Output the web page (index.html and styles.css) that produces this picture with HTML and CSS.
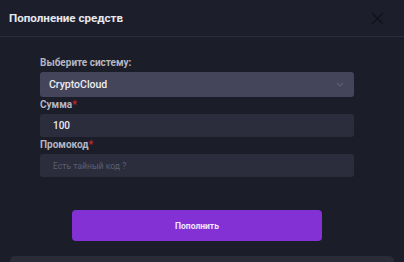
FILE: index.html
```html
<!DOCTYPE html>
<html lang="ru">
<head>
  <meta charset="UTF-8" />
  <meta name="viewport" content="width=device-width, initial-scale=1.0"/>
  <title>Пополнение средств</title>
  <link rel="stylesheet" href="styles.css">
</head>
<body>
  <div class="modal">
    <div class="modal-head">
      <h2>Пополнение средств</h2>
      <button class="close-btn" aria-label="Закрыть">
        <svg width="13" height="13" viewBox="0 0 13 13"><path d="M1.5 1.5L11.5 11.5M11.5 1.5L1.5 11.5" stroke="currentColor" stroke-width="1.6" stroke-linecap="round"/></svg>
      </button>
    </div>

    <form class="modal-body">
      <label class="field-label">Выберите систему:</label>
      <div class="select">
        <span>CryptoCloud</span>
        <svg width="8" height="5" viewBox="0 0 8 5"><path d="M1 1L4 4L7 1" fill="none" stroke="currentColor" stroke-width="1.2"/></svg>
      </div>

      <label class="field-label">Сумма<span class="req">*</span></label>
      <input type="text" class="field" value="100" />

      <label class="field-label">Промокод<span class="req">*</span></label>
      <input type="text" class="field" placeholder="Есть тайный код ?" />

      <button type="button" class="submit-btn">Пополнить</button>
    </form>

    <div class="next-block"></div>
  </div>
</body>
</html>
```

FILE: styles.css
```css
* {
  margin: 0;
  padding: 0;
  box-sizing: border-box;
}

body {
  background-color: #1b1e29;
  font-family: 'Roboto', 'Noto Sans', sans-serif;
  overflow: hidden;
}

.modal {
  width: 404px;
  height: 262px;
  display: flex;
  flex-direction: column;
  overflow: hidden;
}

.modal > * {
  flex-shrink: 0;
}

.modal-head {
  height: 37px;
  display: flex;
  align-items: center;
  justify-content: space-between;
  padding: 0 20px 0 9px;
  background-color: #1c1f2b;
  border-bottom: 1px solid #2a2d3b;
}

.modal-head h2 {
  font-size: 11.6px;
  font-weight: 700;
  color: #e6e7ee;
}

.close-btn {
  background: none;
  border: none;
  color: #10121b;
  display: flex;
}

.modal-body {
  display: flex;
  flex-direction: column;
  padding: 20px 50px 0 40px;
}

.field-label {
  font-size: 10px;
  font-weight: 700;
  color: #b5b6c2;
  line-height: 12px;
  margin-bottom: 3px;
}

.req {
  color: #d4212b;
}

.select {
  height: 25px;
  border-radius: 3px;
  background-color: #44455a;
  display: flex;
  align-items: center;
  justify-content: space-between;
  padding: 0 10px 0 9px;
  color: #ececf2;
  font-size: 10.5px;
  font-weight: 500;
  margin-bottom: 2px;
}

.select svg {
  color: #5b5c70;
}

.field {
  height: 23px;
  border-radius: 3px;
  border: none;
  outline: none;
  background-color: #2b2d3c;
  padding: 0 13px;
  color: #ececf2;
  font-family: inherit;
  font-size: 10px;
  font-weight: 500;
  margin-bottom: 2px;
}

.field::placeholder {
  color: #5d5f70;
  font-weight: 400;
  font-size: 8.6px;
}

.submit-btn {
  align-self: flex-start;
  margin: 31px 0 0 32px;
  width: 250px;
  height: 31px;
  border: none;
  border-radius: 4px;
  background-color: #8331d4;
  color: #f1e6ff;
  font-family: inherit;
  font-size: 8.5px;
  font-weight: 700;
}

.next-block {
  margin: 15px 10px 0;
  height: 20px;
  border-radius: 5px 5px 0 0;
  background-color: #292b37;
}
```
